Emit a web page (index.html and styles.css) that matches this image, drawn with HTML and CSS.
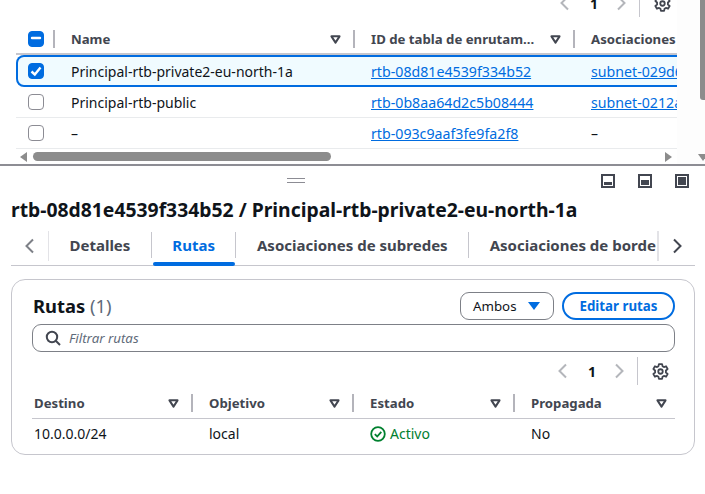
FILE: index.html
```html
<!DOCTYPE html>
<html lang="es">
<head>
  <meta charset="UTF-8" />
  <title>Rutas</title>
  <link rel="stylesheet" href="styles.css">
</head>
<body>
  <svg class="defs" width="0" height="0">
    <symbol id="gear" viewBox="0 0 16 16">
      <path d="M6.500 1h3l.4 2 1.300.8 2-.7 1.500 2.600-1.600 1.400v1.800l1.600 1.400-1.500 2.600-2-.7-1.300.8-.4 2h-3l-.4-2-1.300-.8-2 .7-1.500-2.600 1.600-1.400V7.100L1.300 5.700l1.500-2.600 2 .7 1.300-.8z" fill="none" stroke="currentColor" stroke-width="1.700" stroke-linejoin="round"/>
      <circle cx="8" cy="8" r="2.100" fill="none" stroke="currentColor" stroke-width="1.700"/>
    </symbol>
    <symbol id="sort" viewBox="0 0 12 10">
      <path d="M1.500 1.500h9L6 8.500z" fill="none" stroke="currentColor" stroke-width="2.200" stroke-linejoin="round"/>
    </symbol>
    <symbol id="prev" viewBox="0 0 12 16">
      <path d="M9 1.500 2.500 8 9 14.500" fill="none" stroke="currentColor" stroke-width="2"/>
    </symbol>
    <symbol id="next" viewBox="0 0 12 16">
      <path d="M3 1.500 9.500 8 3 14.500" fill="none" stroke="currentColor" stroke-width="2"/>
    </symbol>
  </svg>

  <section class="top-pane">
    <div class="top-inner">
      <div class="pager pager-top">
        <svg class="chev off"><use href="#prev"/></svg>
        <span class="page-num">1</span>
        <svg class="chev off"><use href="#next"/></svg>
        <span class="pager-sep"></span>
        <svg class="gear"><use href="#gear"/></svg>
      </div>
      <div class="rt-table">
        <div class="rt-row rt-head">
          <div class="cell check-cell">
            <span class="check on"><svg viewBox="0 0 16 16"><path d="M4 8h8" stroke="#fff" stroke-width="2.400" stroke-linecap="round"/></svg></span>
            <i class="sep"></i>
          </div>
          <div class="cell">Name<svg class="sort"><use href="#sort"/></svg><i class="sep"></i></div>
          <div class="cell">ID de tabla de enrutam...<svg class="sort"><use href="#sort"/></svg><i class="sep"></i></div>
          <div class="cell">Asociaciones</div>
        </div>
        <div class="rt-row selected">
          <div class="cell check-cell"><span class="check on"><svg viewBox="0 0 16 16"><path d="M3.500 8.500 6.800 11.500 12.500 4.500" fill="none" stroke="#fff" stroke-width="2.400"/></svg></span></div>
          <div class="cell">Principal-rtb-private2-eu-north-1a</div>
          <div class="cell"><a href="#">rtb-08d81e4539f334b52</a></div>
          <div class="cell"><a href="#">subnet-029d6c41e7a8</a></div>
        </div>
        <div class="rt-row">
          <div class="cell check-cell"><span class="check"></span></div>
          <div class="cell">Principal-rtb-public</div>
          <div class="cell"><a href="#">rtb-0b8aa64d2c5b08444</a></div>
          <div class="cell"><a href="#">subnet-0212a7c93e01</a></div>
        </div>
        <div class="rt-row">
          <div class="cell check-cell"><span class="check"></span></div>
          <div class="cell">–</div>
          <div class="cell"><a href="#">rtb-093c9aaf3fe9fa2f8</a></div>
          <div class="cell">–</div>
        </div>
      </div>
      <div class="hscroll">
        <span class="arrow-left"></span>
        <span class="hthumb"></span>
        <span class="arrow-right"></span>
      </div>
    </div>
    <div class="vscroll">
      <span class="vthumb"></span>
      <span class="arrow-down"></span>
    </div>
  </section>

  <section class="bottom-pane">
    <div class="pane-bar">
      <span class="handle"></span>
      <div class="pane-icons">
        <span class="pane-icon low"></span>
        <span class="pane-icon mid"></span>
        <span class="pane-icon full"></span>
      </div>
    </div>
    <h1 class="title">rtb-08d81e4539f334b52 / Principal-rtb-private2-eu-north-1a</h1>

    <div class="tabs">
      <span class="tab-arrow left"><svg><use href="#prev"/></svg></span>
      <div class="tab-list">
        <span class="tab">Detalles</span>
        <span class="tab active">Rutas</span>
        <span class="tab">Asociaciones de subredes</span>
        <span class="tab">Asociaciones de borde</span>
      </div>
      <span class="tab-arrow right"><svg><use href="#next"/></svg></span>
    </div>

    <div class="card">
      <div class="card-head">
        <h2>Rutas <span class="count">(1)</span></h2>
        <div class="actions">
          <button class="btn-select">Ambos<span class="caret"></span></button>
          <button class="btn-edit">Editar rutas</button>
        </div>
      </div>
      <div class="filter">
        <svg viewBox="0 0 16 16"><circle cx="7" cy="7" r="5.200" fill="none" stroke="currentColor" stroke-width="2"/><path d="M11 11l4 4" stroke="currentColor" stroke-width="2"/></svg>
        <span>Filtrar rutas</span>
      </div>
      <div class="pager pager-card">
        <svg class="chev off"><use href="#prev"/></svg>
        <span class="page-num">1</span>
        <svg class="chev off"><use href="#next"/></svg>
        <span class="pager-sep"></span>
        <svg class="gear"><use href="#gear"/></svg>
      </div>
      <div class="routes">
        <div class="routes-row routes-head">
          <div class="rcell">Destino<svg class="sort"><use href="#sort"/></svg><i class="sep"></i></div>
          <div class="rcell">Objetivo<svg class="sort"><use href="#sort"/></svg><i class="sep"></i></div>
          <div class="rcell">Estado<svg class="sort"><use href="#sort"/></svg><i class="sep"></i></div>
          <div class="rcell">Propagada<svg class="sort"><use href="#sort"/></svg></div>
        </div>
        <div class="routes-row routes-body">
          <div class="rcell">10.0.0.0/24</div>
          <div class="rcell">local</div>
          <div class="rcell status">
            <svg viewBox="0 0 16 16"><circle cx="8" cy="8" r="6.800" fill="none" stroke="currentColor" stroke-width="1.800"/><path d="M4.800 8.200 7.200 10.500 11.300 5.800" fill="none" stroke="currentColor" stroke-width="1.800"/></svg>
            Activo
          </div>
          <div class="rcell">No</div>
        </div>
      </div>
    </div>
  </section>
</body>
</html>
```

FILE: styles.css
```css
* {
  box-sizing: border-box;
}
html, body {
  height: 100%;
}
body {
  margin: 0;
  width: 705px;
  height: 494px;
  overflow: hidden;
  background: #fff;
  color: #0f141a;
  font-family: "Noto Sans", "Open Sans", sans-serif;
  font-size: 14px;
}
.defs {
  display: block;
  height: 0;
}
a {
  color: #006ce0;
  text-decoration: underline;
  font-size: 14.2px;
}

/* top split pane */
.top-pane {
  height: 166px;
  display: flex;
  border-bottom: 2px solid #8d8d94;
  overflow: hidden;
}
.top-inner {
  width: 677px;
  margin-top: -17px;
  padding-left: 16px;
  display: flex;
  flex-direction: column;
  flex: none;
}
.vscroll {
  flex: 1;
  background: #fdfdfd;
  display: flex;
  flex-direction: column;
  justify-content: space-between;
  align-items: flex-end;
  padding-bottom: 3px;
  overflow: hidden;
}
.vthumb {
  width: 5px;
  height: 100px;
  background: #8c8c8c;
  border-radius: 0 0 0 3px;
}
.arrow-down {
  margin-right: -3px;
  width: 0;
  height: 0;
  border-left: 5px solid transparent;
  border-right: 5px solid transparent;
  border-top: 7px solid #8c8c8c;
}

/* pager */
.pager {
  display: flex;
  align-items: center;
  justify-content: flex-end;
}
.pager-top {
  height: 40px;
  flex: none;
  margin-right: 6px;
}
.pager-card {
  height: 30px;
  margin-top: 4px;
  margin-bottom: 1px;
  margin-right: 6px;
}
.chev {
  width: 12px;
  height: 16px;
  color: #b4b6bb;
}
.page-num {
  width: 44px;
  padding-left: 2px;
  text-align: center;
  font-weight: 700;
  font-size: 14px;
}
.pager-sep {
  width: 1px;
  height: 28px;
  background: #c6c6cd;
  margin: 0 14px 0 12px;
}
.gear {
  width: 17px;
  height: 17px;
  color: #424650;
}

/* route table list */
.rt-table {
  overflow: hidden;
}
.rt-row {
  display: grid;
  grid-template-columns: 39px 300px 220px 1fr;
  height: 31px;
  align-items: center;
  border-bottom: 1px solid #e9ebed;
  white-space: nowrap;
}
.rt-head {
  height: 32px;
  border-bottom: 2px solid #c6c6cd;
  padding-top: 1px;
  font-size: 13.2px;
  font-weight: 700;
  color: #424650;
}
.rt-row.selected {
  height: 32px;
  margin-right: -12px;
  background: #f0fbff;
  border-bottom: none;
  box-shadow: inset 0 0 0 2px #006ce0;
  border-radius: 8px 0 0 8px;
}
.cell {
  position: relative;
  padding-left: 16px;
  display: flex;
  align-items: center;
  height: 100%;
  min-width: 0;
}
.check-cell {
  padding: 0 0 0 12px;
}
.check {
  width: 16px;
  height: 16px;
  border: 1.500px solid #8c8c94;
  border-radius: 4px;
  display: block;
  background: #fff;
}
.check.on {
  background: #006ce0;
  border-color: #006ce0;
}
.check svg {
  display: block;
  width: 16px;
  height: 16px;
  margin: -1.500px;
}
.sort {
  position: absolute;
  right: 14px;
  top: 50%;
  width: 11px;
  height: 9px;
  margin-top: -4px;
  color: #424650;
}
.sep {
  position: absolute;
  right: 0;
  top: 50%;
  height: 18px;
  margin-top: -9px;
  width: 2px;
  background: #b4b4bb;
}

.hscroll {
  height: 15px;
  flex: none;
  display: flex;
  align-items: center;
  margin-left: 4px;
  margin-right: 5px;
}
.arrow-left {
  width: 0;
  height: 0;
  border-top: 5px solid transparent;
  border-bottom: 5px solid transparent;
  border-right: 7px solid #8c8c8c;
}
.hthumb {
  width: 298px;
  height: 9px;
  margin-left: 6px;
  background: #8c8c8c;
  border-radius: 5px;
}
.arrow-right {
  margin-left: auto;
  width: 0;
  height: 0;
  border-top: 5px solid transparent;
  border-bottom: 5px solid transparent;
  border-left: 7px solid #8c8c8c;
}

/* bottom split pane */
.bottom-pane {
  padding: 0 10px 0 11px;
}
.pane-bar {
  height: 29px;
  position: relative;
  display: flex;
  justify-content: flex-end;
  align-items: center;
}
.handle {
  position: absolute;
  left: 276px;
  top: 12px;
  width: 18px;
  height: 5px;
  border-top: 1px solid #8c8c94;
  border-bottom: 1px solid #8c8c94;
}
.pane-icons {
  display: flex;
  gap: 23px;
  margin-right: 6px;
}
.pane-icon {
  width: 14px;
  height: 14px;
  border: 2px solid #424650;
  padding: 1px;
  display: block;
  background-image: linear-gradient(#424650, #424650);
  background-repeat: no-repeat;
  background-position: bottom;
  background-origin: content-box;
  background-clip: content-box;
}
.pane-icon.low { background-size: 100% 3px; }
.pane-icon.mid { background-size: 100% 5px; }
.pane-icon.full { background-size: 100% 100%; }
.title {
  margin: 0;
  font-size: 19.330px;
  line-height: 30px;
  font-weight: 700;
  white-space: nowrap;
}

/* tabs */
.tabs {
  margin-top: 6px;
  height: 35px;
  display: flex;
  align-items: stretch;
  border-bottom: 1px solid #c6c6cd;
}
.tab-arrow {
  width: 37px;
  height: 30px;
  display: flex;
  align-items: center;
  justify-content: center;
  color: #7d8087;
  flex: none;
}
.tab-arrow svg {
  width: 12px;
  height: 16px;
}
.tab-arrow.right {
  color: #424650;
  width: 36px;
}
.tab-list {
  flex: 1;
  min-width: 0;
  height: 30px;
  display: flex;
  position: relative;
  border-left: 1px solid #e3e3e7;
  border-right: 2px solid #e3e3e7;
}
.tab {
  padding: 0 20.500px;
  font-weight: 700;
  font-size: 15px;
  color: #424650;
  line-height: 26px;
  white-space: nowrap;
  position: relative;
  border-right: 1px solid #c6c6cd;
  height: 26px;
  margin-top: 1px;
}
.tab:last-child {
  border-right: none;
}
.tab.active {
  color: #006ce0;
}
.tab.active::after {
  content: "";
  position: absolute;
  left: 1px;
  right: 0;
  top: 30px;
  height: 4px;
  border-radius: 2px;
  background: #006ce0;
}

/* card */
.card {
  margin-top: 13px;
  height: 176px;
  border: 1px solid #c6c6cd;
  border-radius: 14px;
  padding: 12px 19px 0 20px;
}
.card-head {
  display: flex;
  justify-content: space-between;
  align-items: center;
  height: 28px;
}
.card-head h2 {
  margin: -2px 0 0 1px;
  font-size: 18.400px;
  font-weight: 700;
}
.count {
  font-weight: 400;
  color: #5f6b7a;
}
.actions {
  display: flex;
  gap: 8px;
}
button {
  font-family: inherit;
  font-size: 13.300px;
  height: 28px;
  border-radius: 14px;
  background: #fff;
}
.btn-select {
  width: 94px;
  border: 1px solid #7d8087;
  border-radius: 9px;
  color: #0f141a;
  display: flex;
  align-items: center;
  padding: 0 0 0 12px;
}
.caret {
  width: 0;
  height: 0;
  margin-left: 11px;
  border-left: 6px solid transparent;
  border-right: 6px solid transparent;
  border-top: 8px solid #006ce0;
}
.btn-edit {
  width: 113px;
  border: 2px solid #006ce0;
  color: #006ce0;
  font-weight: 700;
}
.filter {
  margin-top: 4px;
  height: 28px;
  border: 1px solid #7d8087;
  border-radius: 9px;
  display: flex;
  align-items: center;
  padding-left: 12px;
  color: #5f6b7a;
  font-style: italic;
  font-size: 13.300px;
}
.filter svg {
  width: 16px;
  height: 16px;
  margin-right: 8px;
  color: #424650;
}
.routes-row {
  display: grid;
  grid-template-columns: 161px 161px 161px 1fr;
  height: 31px;
  align-items: center;
}
.routes-head {
  height: 32px;
  border-bottom: 1px solid #c6c6cd;
  font-size: 13.200px;
  font-weight: 700;
  color: #424650;
}
.routes-body {
  padding-bottom: 2px;
}
.rcell {
  position: relative;
  padding-left: 16px;
  height: 100%;
  display: flex;
  align-items: center;
}
.rcell:first-child {
  padding-left: 2px;
}
.routes-head .rcell:last-child .sort {
  right: 8px;
}
.status {
  color: #00802f;
}
.status svg {
  width: 16px;
  height: 16px;
  margin-right: 4px;
}
```
